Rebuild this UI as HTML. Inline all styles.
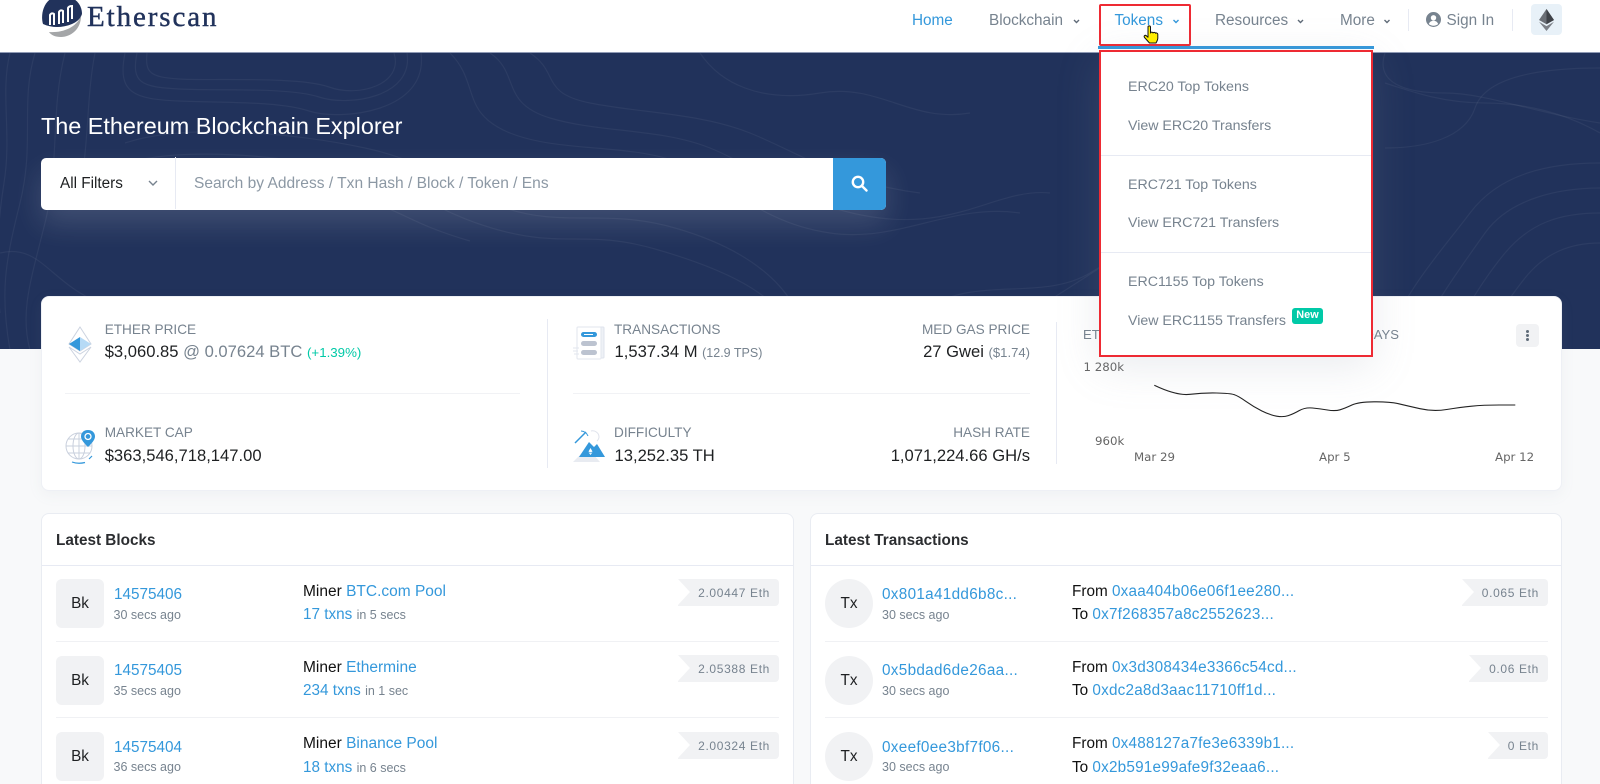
<!DOCTYPE html>
<html><head><meta charset="utf-8"><title>Etherscan</title>
<style>
*{box-sizing:border-box}
html,body{margin:0;padding:0;width:1600px;height:784px;overflow:hidden;background:#f8f9fa;font-family:"Liberation Sans",sans-serif;color:#1e2022}
#w{position:relative;width:1600px;height:784px;overflow:hidden}
.t{position:absolute;white-space:nowrap;line-height:20px;font-size:15.3px}
.r{text-align:right}
.g{color:#77838f}.b{color:#3498db}
.l{font-size:13.6px;color:#77838f}
.v{font-size:16.6px;color:#1e2022}
.s{font-size:13.08px;color:#77838f}
.a{font-size:12.5px;color:#77838f;letter-spacing:0}
.m{font-size:15.5px}
.h{letter-spacing:.3px}
.f{letter-spacing:.2px}
.box{position:absolute;background:#fff;border:1px solid #e7eaf3}
.ln{position:absolute;background:#e7eaf3}
.sq{position:absolute;width:48px;height:49px;background:#f1f2f4;border-radius:6px;font-size:15.3px;line-height:50px;text-align:center}
.sq.c{border-radius:50%}
.p{position:absolute;height:27px;background:#f1f2f4;border-radius:0 4px 4px 0;font-size:12px;letter-spacing:.65px;line-height:28.500px;color:#77838f;padding:0 9px 0 20px;white-space:nowrap}
.p:before{content:"";position:absolute;left:0;top:0;border-left:12px solid #fff;border-top:13.5px solid transparent;border-bottom:13.5px solid transparent}
.dd{font-size:14.2px;color:#77838f}
.cl{font-family:"DejaVu Sans",sans-serif;font-size:11.8px;color:#666;position:absolute;white-space:nowrap;line-height:14px}
</style></head><body><div id="w">

<!-- header -->
<div style="position:absolute;left:0;top:0;width:1600px;height:52px;background:#fff"></div>
<svg style="position:absolute;left:38px;top:0" width="48" height="40" viewBox="0 0 48 40">
<path d="M5 24C2 14 6-4 23-4s21 11 21 18C42 20 38 22 34 24C24 28 14 28 5 24Z" fill="#21325b"/>
<path d="M43 16C43 29 33 37 23 37C17 37 13 35 11 32C24 33 38 28 43 16Z" fill="#a4a6a8"/>
<path d="M12 25V15C13 13 15 13 16 14V25M21 24V12C22 10 24 10 25 11V23M30 22V8C31 6 33 6 34 6V19" fill="none" stroke="#fff" stroke-width="2"/>
</svg>
<div class="t" style="left:87px;top:1px;font-family:'Liberation Serif',serif;font-size:29px;line-height:32px;letter-spacing:1.9px;color:#21325b;-webkit-text-stroke:.4px #21325b">Etherscan</div>

<div class="t b" style="left:912px;top:10.500px">Home</div>
<div class="t g" style="left:989px;top:10.500px">Blockchain</div>
<div class="t b" style="left:1114.5px;top:10.500px">Tokens</div>
<div class="t g" style="left:1215px;top:10.500px">Resources</div>
<div class="t g" style="left:1340px;top:10.500px">More</div>
<svg style="position:absolute;left:0;top:0" width="1600" height="52" fill="none" stroke-width="1.4">
<path d="M1074 20l2.500 2.500 2.500-2.500M1298 20l2.500 2.500 2.500-2.500M1384.500 20l2.500 2.500 2.500-2.500" stroke="#5f6b78"/>
<path d="M1173.500 20l2.500 2.500 2.500-2.500" stroke="#3498db"/>
</svg>
<div class="ln" style="left:1408px;top:9px;width:1px;height:22px"></div>
<div class="ln" style="left:1512px;top:9px;width:1px;height:22px"></div>
<svg style="position:absolute;left:1426px;top:11.500px" width="15" height="15" viewBox="0 0 15 15"><circle cx="7.500" cy="7.500" r="7.500" fill="#77838f"/><circle cx="7.500" cy="5.800" r="2.700" fill="#fff"/><path d="M2.800 12c.8-2.300 2.500-3.300 4.700-3.300s3.900 1 4.700 3.300c-2.500 2.300-6.900 2.300-9.400 0Z" fill="#fff"/></svg>
<div class="t g" style="left:1446.500px;top:10.500px">Sign In</div>
<div style="position:absolute;left:1531px;top:4px;width:31px;height:31px;background:#e8f1f8;border-radius:4px"></div>
<svg style="position:absolute;left:1539px;top:9px" width="15" height="22" viewBox="0 0 15 22"><path d="M7.500 0L0 11l7.500 4.300L15 11Z" fill="#6b6f76"/><path d="M7.500 0V15.300L15 11Z" fill="#3f4248"/><path d="M0 12.700L7.500 22l7.500-9.300-7.500 4.400Z" fill="#7c8087"/></svg>

<!-- hero -->
<div style="position:absolute;left:0;top:52px;width:1600px;height:297px;background:#21325b;border-top:1px solid #8f9ab5;overflow:hidden">
<svg width="1600" height="297" fill="none" stroke="#fff" stroke-opacity=".05" stroke-width="1.200">
<path d="M147 0c-2 20 3 24 32 26s120-3 150 8 75-3 65-34"/>
<path d="M137 0c-6 30 4 34 42 36s110-2 140 8 95 0 88-44"/>
<path d="M125 0c-8 40 8 46 54 48s100 0 130 10 120 2 112-58"/>
<path d="M10 0C0 40 12 80 4 130s-8 90-4 130"/>
<path d="M35 0C20 50 35 90 20 150S0 240 10 297"/>
<path d="M65 0C50 60 60 110 45 170S20 260 30 297"/>
<path d="M95 0C85 50 90 110 75 150"/>
<path d="M125 90c60-20 170-10 240 5s80 40 140 60 100 0 170 20 130 60 130 122"/>
<path d="M125 110c60-16 150-8 220 6s80 40 150 60 90 0 160 20 140 50 140 101"/>
<path d="M130 130c50-12 130-6 200 8s70 30 140 50"/>
<path d="M450 0c30 30 10 60 60 80s120 10 170 30 80 60 150 70 120-30 190-20"/>
<path d="M490 0c30 20 10 50 60 65s110 10 160 30 90 60 170 70 120-30 170-25"/>
<path d="M530 0c30 20 10 40 60 50s110 10 160 30 90 50 170 60"/>
<path d="M700 0c20 30 60 50 120 40s90 30 150 20"/>
<path d="M1385 0c-10 30 20 40 60 40s90 20 155 30"/>
<path d="M1385 30c30 10 60 20 100 20s80 10 115 30"/>
<path d="M1600 110c-50 0-100 10-130 50s-60 70-90 137"/>
<path d="M1600 135c-40 0-90 10-115 45s-50 70-75 117"/>
<path d="M1600 160c-40 0-70 10-95 40s-40 60-65 97"/>
<path d="M1600 190c-30 0-55 10-75 35s-35 50-50 72"/>
<path d="M920 260c50-40 120-10 170-40s-60 40-120 77"/>
<path d="M300 297c60-40 120-20 200-30s140 10 200 30"/>
<path d="M0 200c40-10 50 30 100 50"/>
<path d="M1385 95c40 0 80-10 90-40s60-40 125-40"/>
</svg></div>
<div class="t" style="left:41px;top:111px;font-size:23.4px;line-height:30px;color:#fff">The Ethereum Blockchain Explorer</div>

<div style="position:absolute;left:41px;top:157.500px;width:845px;height:52px;background:#fff;border-radius:5px;box-shadow:0 14px 30px rgba(255,255,255,.14)"></div>
<div class="t" style="left:60px;top:174px;color:#1e2022">All Filters</div>
<svg style="position:absolute;left:148px;top:180px" width="10" height="7" fill="none" stroke="#77838f" stroke-width="1.400"><path d="M1 1l4 4 4-4"/></svg>
<div class="ln" style="left:175px;top:157px;width:1px;height:52px"></div>
<div class="t" style="left:194px;top:174px;font-size:15.55px;color:#8c98a4">Search by Address / Txn Hash / Block / Token / Ens</div>
<div style="position:absolute;left:833px;top:157.500px;width:53px;height:52px;background:#3498db;border-radius:0 5px 5px 0"></div>
<svg style="position:absolute;left:851px;top:175px" width="17" height="17" fill="none" stroke="#fff" stroke-width="2.400"><circle cx="7" cy="7" r="5.200"/><path d="M11 11l4.500 4.500" stroke-linecap="round"/></svg>

<!-- stats card -->
<div style="position:absolute;left:41px;top:296px;width:1521px;height:195px;background:#fff;border:1px solid #eef0f5;border-radius:8px;box-shadow:0 4px 14px rgba(140,152,164,.08)"></div>

<svg style="position:absolute;left:68px;top:326px" width="24" height="37" viewBox="0 0 24 37">
<path d="M12 1L1 18l11 7 11-7Z M1 21l11 15 11-15-11 7Z" fill="none" stroke="#ccd3e0" stroke-width="1"/>
<path d="M12 11L1 18l11 7Z" fill="#3498db"/><path d="M12 11l11 7-11 7Z" fill="#b6daf6"/>
</svg>
<div class="t l" style="left:104.700px;top:320px">ETHER PRICE</div>
<div class="t v" style="left:104.700px;top:342px">$3,060.85 <span class="g">@ 0.07624 BTC</span> <span style="font-size:13.3px;color:#00c9a7">(+1.39%)</span></div>
<div class="ln" style="left:65px;top:393px;width:455px;height:1px;background:#f1f2f5"></div>

<svg style="position:absolute;left:65px;top:429px" width="32" height="35" viewBox="0 0 32 35" fill="none">
<g stroke="#c9d0dd" stroke-width="1"><circle cx="14" cy="17" r="13"/><ellipse cx="14" cy="17" rx="6" ry="13"/><path d="M1 17h26M14 4v26M3 10h22M3 24h22"/></g>
<path d="M7 33c4 1.500 9 1.500 13 .5M24 30l3-3" stroke="#3498db" stroke-width="1.200"/>
<path d="M23 1c-4.500 0-7 3-7 6.500S20 15 23 18c3-3 7-7 7-10.500S27.500 1 23 1Z" fill="#3498db"/><circle cx="23" cy="7.500" r="3" fill="#3498db" stroke="#fff" stroke-width="1.300"/>
</svg>
<div class="t l" style="left:104.700px;top:422.500px">MARKET CAP</div>
<div class="t v" style="left:104.700px;top:445.500px">$363,546,718,147.00</div>

<div class="ln" style="left:547px;top:319px;width:1px;height:149px"></div>

<svg style="position:absolute;left:573px;top:326px" width="33" height="35" viewBox="0 0 33 35" fill="none">
<rect x="6" y="1" width="25" height="31" rx="1" fill="#eef1f6" stroke="#dfe3ec"/><rect x="4" y="1" width="24" height="32" rx="1" fill="#fff" stroke="#e2e6ee"/>
<rect x="8" y="6" width="16" height="5" rx="2.500" fill="#3498db"/><rect x="11" y="8" width="9" height="1" fill="#fff"/>
<rect x="8" y="15" width="16" height="5" rx="2.500" fill="#bcc3d0"/><rect x="8" y="24" width="16" height="5" rx="2.500" fill="#bcc3d0"/>
<path d="M0 22h6M0 25h5M1 28h5" stroke="#e2e6ee"/>
</svg>
<div class="t l" style="left:614px;top:320px">TRANSACTIONS</div>
<div class="t v" style="left:614.500px;top:342px">1,537.34 M <span style="font-size:12.5px;color:#77838f">(12.9 TPS)</span></div>
<div class="t l r" style="right:570px;top:320px">MED GAS PRICE</div>
<div class="t v r" style="right:570px;top:342px">27 Gwei <span class="s">($1.74)</span></div>
<div class="ln" style="left:573px;top:393px;width:457px;height:1px;background:#f1f2f5"></div>

<svg style="position:absolute;left:573px;top:429px" width="33" height="34" viewBox="0 0 33 34" fill="none">
<path d="M2 14L13 3" stroke="#3498db" stroke-width="1.500"/><path d="M8 2c3 0 6 2 7 5" stroke="#3498db" stroke-width="1"/>
<path d="M18 2c4-1 8 2 8 6 0 2-1 3-2 4" stroke="#dfe3ec" stroke-width="1"/>
<path d="M0 33l8-8h12l7 8Z" fill="#e8ebf1"/>
<path d="M6 28l10-15 5 5 3-3 8 13Z" fill="#3498db"/>
<path d="M17.500 19l-2 3.500 2 1 2-1Zm-2 4.300l2 2.700 2-2.700-2 1Z" fill="#fff"/>
</svg>
<div class="t l" style="left:614px;top:422.500px">DIFFICULTY</div>
<div class="t v" style="left:614.500px;top:445.500px">13,252.35 TH</div>
<div class="t l r" style="right:570px;top:422.500px">HASH RATE</div>
<div class="t v r" style="right:570px;top:445.500px">1,071,224.66 GH/s</div>

<div class="ln" style="left:1056px;top:322px;width:1px;height:142px"></div>
<div class="t" style="left:1083px;top:325px;font-size:13.08px;color:#77838f">ETHEREUM TRANSACTION</div>
<div class="t r" style="right:201px;top:325px;font-size:13.08px;color:#77838f">HISTORY IN 14 DAYS</div>
<div style="position:absolute;left:1516px;top:324px;width:23px;height:23px;background:#f1f2f4;border-radius:4px"></div>
<svg style="position:absolute;left:1516px;top:324px" width="23" height="23" fill="#5f6b78"><circle cx="11.500" cy="7.500" r="1.500"/><circle cx="11.500" cy="11.500" r="1.500"/><circle cx="11.500" cy="15.500" r="1.500"/></svg>
<div class="cl" style="left:1083.500px;top:360px">1 280k</div>
<div class="cl" style="left:1095px;top:433.500px">960k</div>
<div class="cl" style="left:1134px;top:450px">Mar 29</div>
<div class="cl" style="left:1319px;top:450px">Apr 5</div>
<div class="cl" style="left:1495px;top:450px">Apr 12</div>
<svg style="position:absolute;left:1030px;top:290px" width="510" height="190" fill="none" stroke="#222" stroke-width="1.100"><path d="M124.300 95.300Q146.700 106 160 104.350T186.650 103Q200 103.300 204.150 104.650T215.800 111.350Q223.300 116.700 231.650 120.850Q240 125 246.650 126.150Q253.300 127.300 258.300 125.650Q263.300 124 269.150 120.650Q275 117.300 282.500 118Q290 118.700 297.500 120Q305 121.300 310 119.800Q315 118.300 321.650 115.150Q328.300 112 344 111.850Q360 111.700 368.350 113.700Q376.700 115.700 390 118.700Q403.300 121.700 416.650 119.500Q430 117.300 441.650 116.150Q453.300 115 469.300 115L485.300 115"/></svg>

<!-- Latest Blocks -->
<div style="position:absolute;left:41px;top:513px;width:753px;height:300px;background:#fff;border:1px solid #e9ecf2;border-radius:8px"></div>
<div class="t" style="left:56px;top:530.500px;font-weight:bold;color:#2b2d30">Latest Blocks</div>
<div class="ln" style="left:42px;top:565px;width:751px;height:1px"></div>

<div class="sq" style="left:56px;top:579px">Bk</div>
<div class="t b" style="left:114px;top:585px">14575406</div>
<div class="t a" style="left:113.500px;top:605px">30 secs ago</div>
<div class="t m" style="left:303px;top:581.500px;color:#111">Miner <span class="b">BTC.com Pool</span></div>
<div class="t b" style="left:303px;top:604.500px">17 txns <span class="a">in 5 secs</span></div>
<div class="p" style="right:821px;top:579px">2.00447 Eth</div>
<div class="ln" style="left:56px;top:641px;width:723px;height:1px;background:#f0f1f4"></div>

<div class="sq" style="left:56px;top:655.500px">Bk</div>
<div class="t b" style="left:114px;top:660.500px">14575405</div>
<div class="t a" style="left:113.500px;top:681px">35 secs ago</div>
<div class="t m" style="left:303px;top:657.500px;color:#111">Miner <span class="b">Ethermine</span></div>
<div class="t b" style="left:303px;top:681px">234 txns <span class="a">in 1 sec</span></div>
<div class="p" style="right:821px;top:655px">2.05388 Eth</div>
<div class="ln" style="left:56px;top:717px;width:723px;height:1px;background:#f0f1f4"></div>

<div class="sq" style="left:56px;top:732px">Bk</div>
<div class="t b" style="left:114px;top:737.500px">14575404</div>
<div class="t a" style="left:113.500px;top:757px">36 secs ago</div>
<div class="t m" style="left:303px;top:733.500px;color:#111">Miner <span class="b">Binance Pool</span></div>
<div class="t b" style="left:303px;top:757.500px">18 txns <span class="a">in 6 secs</span></div>
<div class="p" style="right:821px;top:732px">2.00324 Eth</div>

<!-- Latest Transactions -->
<div style="position:absolute;left:810px;top:513px;width:752px;height:300px;background:#fff;border:1px solid #e9ecf2;border-radius:8px"></div>
<div class="t" style="left:825px;top:530.500px;font-weight:bold;color:#2b2d30">Latest Transactions</div>
<div class="ln" style="left:811px;top:565px;width:750px;height:1px"></div>

<div class="sq c" style="left:825px;top:579px">Tx</div>
<div class="t b h" style="left:882px;top:585px">0x801a41dd6b8c...</div>
<div class="t a" style="left:882px;top:605px">30 secs ago</div>
<div class="t" style="left:1072px;top:581.500px;color:#111">From <span class="b f">0xaa404b06e06f1ee280...</span></div>
<div class="t" style="left:1072px;top:604.500px;color:#111">To <span class="b f">0x7f268357a8c2552623...</span></div>
<div class="p" style="right:52px;top:579px">0.065 Eth</div>
<div class="ln" style="left:825px;top:641px;width:723px;height:1px;background:#f0f1f4"></div>

<div class="sq c" style="left:825px;top:655.500px">Tx</div>
<div class="t b h" style="left:882px;top:660.500px">0x5bdad6de26aa...</div>
<div class="t a" style="left:882px;top:681px">30 secs ago</div>
<div class="t" style="left:1072px;top:657.500px;color:#111">From <span class="b f">0x3d308434e3366c54cd...</span></div>
<div class="t" style="left:1072px;top:681px;color:#111">To <span class="b f">0xdc2a8d3aac11710ff1d...</span></div>
<div class="p" style="right:52px;top:655px">0.06 Eth</div>
<div class="ln" style="left:825px;top:717px;width:723px;height:1px;background:#f0f1f4"></div>

<div class="sq c" style="left:825px;top:732px">Tx</div>
<div class="t b h" style="left:882px;top:737.500px">0xeef0ee3bf7f06...</div>
<div class="t a" style="left:882px;top:757px">30 secs ago</div>
<div class="t" style="left:1072px;top:733.500px;color:#111">From <span class="b f">0x488127a7fe3e6339b1...</span></div>
<div class="t" style="left:1072px;top:757.500px;color:#111">To <span class="b f">0x2b591e99afe9f32eaa6...</span></div>
<div class="p" style="right:52px;top:732px">0 Eth</div>

<!-- dropdown -->
<div style="position:absolute;left:1098px;top:46px;width:276px;height:3px;background:#3498db"></div>
<div style="position:absolute;left:1099px;top:4px;width:92px;height:42px;border:2px solid #ee2a33;border-radius:2px"></div>
<div style="position:absolute;left:1099px;top:50px;width:274px;height:307px;background:#fff;border:2px solid #ee2a33;box-shadow:0 10px 40px rgba(140,152,164,.18)"></div>
<div class="t dd" style="left:1128px;top:77px">ERC20 Top Tokens</div>
<div class="t dd" style="left:1128px;top:115.500px">View ERC20 Transfers</div>
<div class="ln" style="left:1101px;top:155px;width:270px;height:1px"></div>
<div class="t dd" style="left:1128px;top:174.500px">ERC721 Top Tokens</div>
<div class="t dd" style="left:1128px;top:213px">View ERC721 Transfers</div>
<div class="ln" style="left:1101px;top:252px;width:270px;height:1px"></div>
<div class="t dd" style="left:1128px;top:271.500px">ERC1155 Top Tokens</div>
<div class="t dd" style="left:1128px;top:311px">View ERC1155 Transfers</div>
<div style="position:absolute;left:1292px;top:308px;width:31px;height:16px;background:#00c9a7;border-radius:3px;color:#fff;font-size:10.900px;font-weight:bold;line-height:15px;text-align:center">New</div>

<!-- cursor -->
<svg style="position:absolute;left:1143px;top:25px" width="17" height="20" viewBox="0 0 17 20"><path d="M5 2c0-1.500 2.400-1.500 2.500 0V8c.5-1.200 2.300-1 2.500 0 .5-1 2.300-.8 2.500.3.600-.7 2.300-.3 2.300 1v4c0 2-1 3-1.800 4.700H6.500C5 16.500 3.500 14.500 1.500 12.500 0.500 11 2 9.700 3.300 10.700L5 12.200Z" fill="#ffee00" stroke="#111" stroke-width="1" stroke-linejoin="round"/></svg>
</div></body></html>
